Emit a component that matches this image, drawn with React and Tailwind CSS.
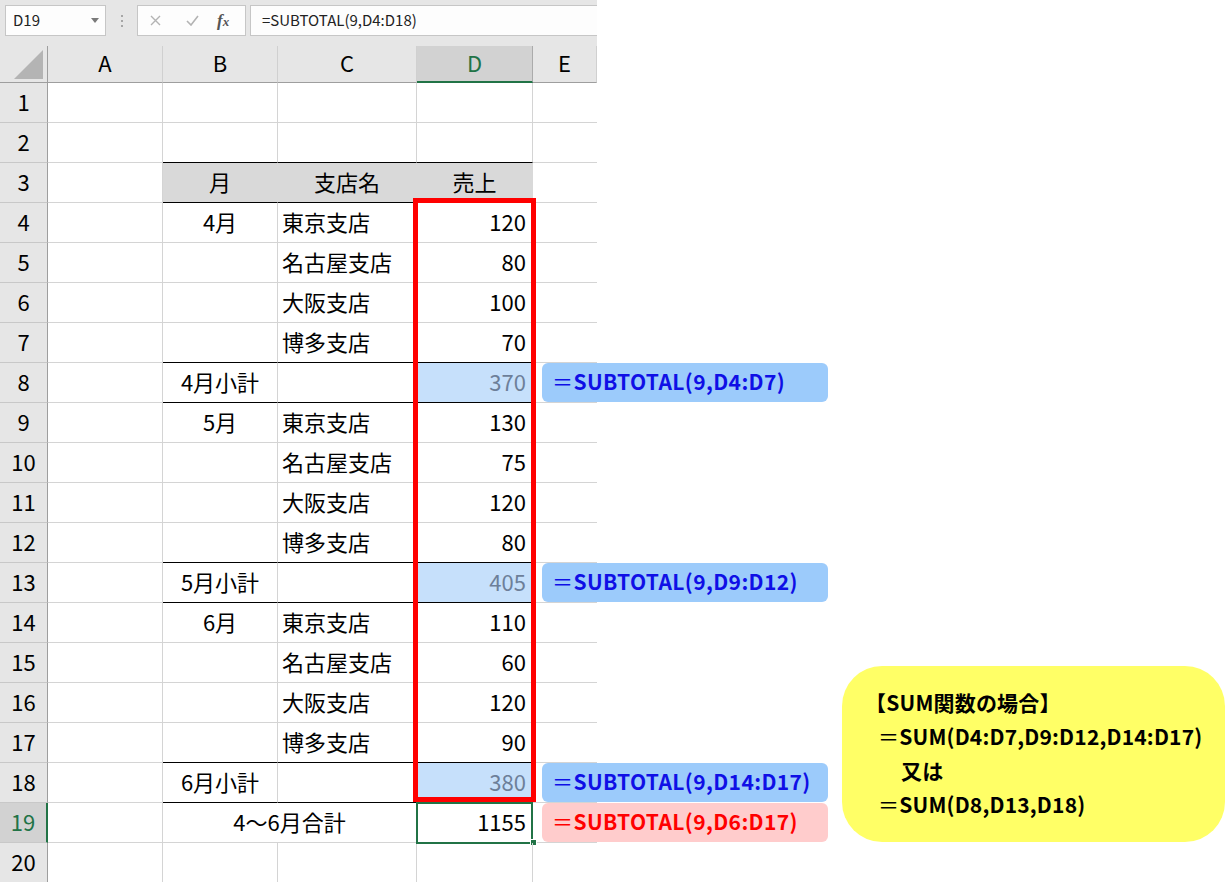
import React from "react";

const ROWS = [
  {},
  { line: true },
  { head: true, line: true, b: "月", c: "支店名", d: "売上" },
  { b: "4月", c: "東京支店", d: "120" },
  { c: "名古屋支店", d: "80" },
  { c: "大阪支店", d: "100" },
  { c: "博多支店", d: "70", line: true },
  { b: "4月小計", d: "370", sub: true, line: true },
  { b: "5月", c: "東京支店", d: "130" },
  { c: "名古屋支店", d: "75" },
  { c: "大阪支店", d: "120" },
  { c: "博多支店", d: "80", line: true },
  { b: "5月小計", d: "405", sub: true, line: true },
  { b: "6月", c: "東京支店", d: "110" },
  { c: "名古屋支店", d: "60" },
  { c: "大阪支店", d: "120" },
  { c: "博多支店", d: "90", line: true },
  { b: "6月小計", d: "380", sub: true, line: true },
  { total: true, b: "4～6月合計", d: "1155" },
  {},
];

const COLS = [
  { key: "A", w: "w-[115px]" },
  { key: "B", w: "w-[115px]" },
  { key: "C", w: "w-[139px]" },
  { key: "D", w: "w-[116px]" },
  { key: "E", w: "w-[64px]" },
];

function Toolbar() {
  return (
    <div className="h-[46px] bg-[#e6e6e6] flex items-start pt-[5px] text-[15px]">
      {/* Name box */}
      <div className="ml-[5px] w-[101px] h-[31px] bg-[#fdfdfd] border border-[#c6c6c6] flex items-center justify-between pl-[7px] pr-[6px] text-[#222]">
        <span>D19</span>
        <svg width="8" height="5" viewBox="0 0 8 5"><path d="M0 0h8L4 5z" fill="#7a7a7a" /></svg>
      </div>
      {/* separator dots */}
      <div className="w-[31px] h-[31px] flex flex-col items-center justify-center gap-[3px]">
        <span className="w-[2px] h-[2px] bg-[#a6a6a6]" />
        <span className="w-[2px] h-[2px] bg-[#a6a6a6]" />
        <span className="w-[2px] h-[2px] bg-[#a6a6a6]" />
      </div>
      {/* cancel / enter / fx */}
      <div className="w-[109px] h-[31px] bg-[#fdfdfd] border border-[#c6c6c6] flex items-center">
        <svg className="ml-[12px]" width="11" height="11" viewBox="0 0 11 11">
          <path d="M1 1l9 9M10 1l-9 9" stroke="#b3b3b3" strokeWidth="1.4" />
        </svg>
        <svg className="ml-[25px]" width="13" height="11" viewBox="0 0 13 11">
          <path d="M1 6l4 4 7-9" stroke="#b3b3b3" strokeWidth="1.6" fill="none" />
        </svg>
        <span className="ml-[18px] italic font-bold text-[#555] font-['Liberation_Serif',serif] text-[17px] leading-none">
          f<span className="text-[13px]">x</span>
        </span>
      </div>
      {/* formula */}
      <div className="ml-[4px] flex-1 h-[31px] bg-[#fdfdfd] border border-r-0 border-[#c6c6c6] flex items-center pl-[11px] text-[#222]">
        =SUBTOTAL(9,D4:D18)
      </div>
    </div>
  );
}

function HeaderRow() {
  return (
    <div className="flex h-[37px] bg-[#e6e6e6] text-[22px]">
      <div className="w-[48px] shrink-0 border-r border-b border-[#9e9e9e] flex items-end justify-end pr-[4px] pb-[3px]">
        <svg width="29" height="29" viewBox="0 0 29 29"><path d="M0 29L29 0v29z" fill="#b4b4b4" /></svg>
      </div>
      {COLS.map((c) =>
        c.key === "D" ? (
          <div key={c.key} className={`${c.w} shrink-0 bg-[#d2d2d2] text-[#217346] border-r border-r-[#ababab] border-b-2 border-b-[#217346] flex items-center justify-center pb-[3px]`}>
            {c.key}
          </div>
        ) : (
          <div key={c.key} className={`${c.w} shrink-0 border-r border-r-[#d0d0d0] border-b border-b-[#9e9e9e] flex items-center justify-center pb-[4px] text-black`}>
            {c.key}
          </div>
        )
      )}
    </div>
  );
}

function Row({ n, r }) {
  const sel = n === 19;
  const grid = "border-[#d4d4d4] pb-[3px]";
  const bottom = r.line ? "border-b-black" : "";
  const bg = r.head ? "bg-[#d9d9d9] border-r-[#d9d9d9]" : "";
  return (
    <div className="flex h-10 text-[22px] text-black">
      <div
        className={
          sel
            ? "w-[48px] shrink-0 flex items-center justify-center pb-[3px] bg-[#d2d2d2] text-[#217346] border-b border-b-[#c8c8c8] border-r-2 border-r-[#217346]"
            : "w-[48px] shrink-0 flex items-center justify-center pb-[3px] bg-[#e6e6e6] border-b border-b-[#c8c8c8] border-r border-r-[#9e9e9e]"
        }
      >
        {n}
      </div>
      <div className={`w-[115px] shrink-0 border-r border-b ${grid}`} />
      {r.total ? (
        <div className={`w-[254px] shrink-0 border-r border-b ${grid} flex items-center justify-center`}>{r.b}</div>
      ) : (
        <>
          <div className={`w-[115px] shrink-0 border-r border-b ${grid} ${bottom} ${bg} flex items-center justify-center`}>{r.b}</div>
          <div className={`w-[139px] shrink-0 border-r border-b ${grid} ${bottom} ${bg} flex items-center ${r.head ? "justify-center" : "pl-[4px]"}`}>{r.c}</div>
        </>
      )}
      <div
        className={`relative w-[116px] shrink-0 border-r border-b ${grid} ${bottom} ${bg} ${
          r.sub ? "bg-[#c6e0fb] border-r-[#c6e0fb] text-[#6d7f99]" : ""
        } flex items-center ${r.head ? "justify-center" : "justify-end pr-[6px]"}`}
      >
        {r.d}
        {sel && (
          <>
            <div className="absolute -left-px -top-px w-[117px] h-[42px] border-2 border-[#217346]" />
            <div className="absolute right-[-5px] bottom-[-4px] w-[7px] h-[7px] bg-[#217346] border border-white" />
          </>
        )}
      </div>
      <div className={`w-[64px] shrink-0 border-b ${grid}`} />
    </div>
  );
}

function Callout({ top, pink, children }) {
  return (
    <div
      className={`absolute left-[542px] w-[286px] h-[39px] rounded-md flex items-center pl-[10px] pb-[1px] text-[21px] tracking-[0.4px] font-bold ${
        pink ? "bg-[#ffcccc] text-[#ff0000]" : "bg-[#9ccbfb] text-[#0f0fe6]"
      }`}
      style={{ top }}
    >
      <span className="font-normal">＝</span>
      {children}
    </div>
  );
}

export default function App() {
  return (
    <div className="relative w-[1226px] h-[882px] overflow-hidden bg-white font-['Noto_Sans_CJK_JP',sans-serif]">
      <div className="w-[597px]">
        <Toolbar />
        <HeaderRow />
        {ROWS.map((r, i) => (
          <Row key={i} n={i + 1} r={r} />
        ))}
      </div>

      {/* red highlight around the 売上 column */}
      <div className="absolute left-[413px] top-[198px] w-[123px] h-[604px] border-[5px] border-[#ff0000]" />

      <Callout top={363}>SUBTOTAL(9,D4:D7)</Callout>
      <Callout top={563}>SUBTOTAL(9,D9:D12)</Callout>
      <Callout top={763}>SUBTOTAL(9,D14:D17)</Callout>
      <Callout top={803} pink>SUBTOTAL(9,D6:D17)</Callout>

      {/* SUM note */}
      <div className="absolute left-[842px] top-[666px] w-[383px] h-[176px] rounded-[40px] bg-[#ffff66] pt-[19px] pl-[23px] text-[21px] tracking-[0.2px] font-bold leading-[34px] text-black">
        <div>【SUM関数の場合】</div>
        <div className="pl-[13px]"><span className="font-normal">＝</span>SUM(D4:D7,D9:D12,D14:D17)</div>
        <div className="pl-[36px]">又は</div>
        <div className="pl-[13px]"><span className="font-normal">＝</span>SUM(D8,D13,D18)</div>
      </div>
    </div>
  );
}
